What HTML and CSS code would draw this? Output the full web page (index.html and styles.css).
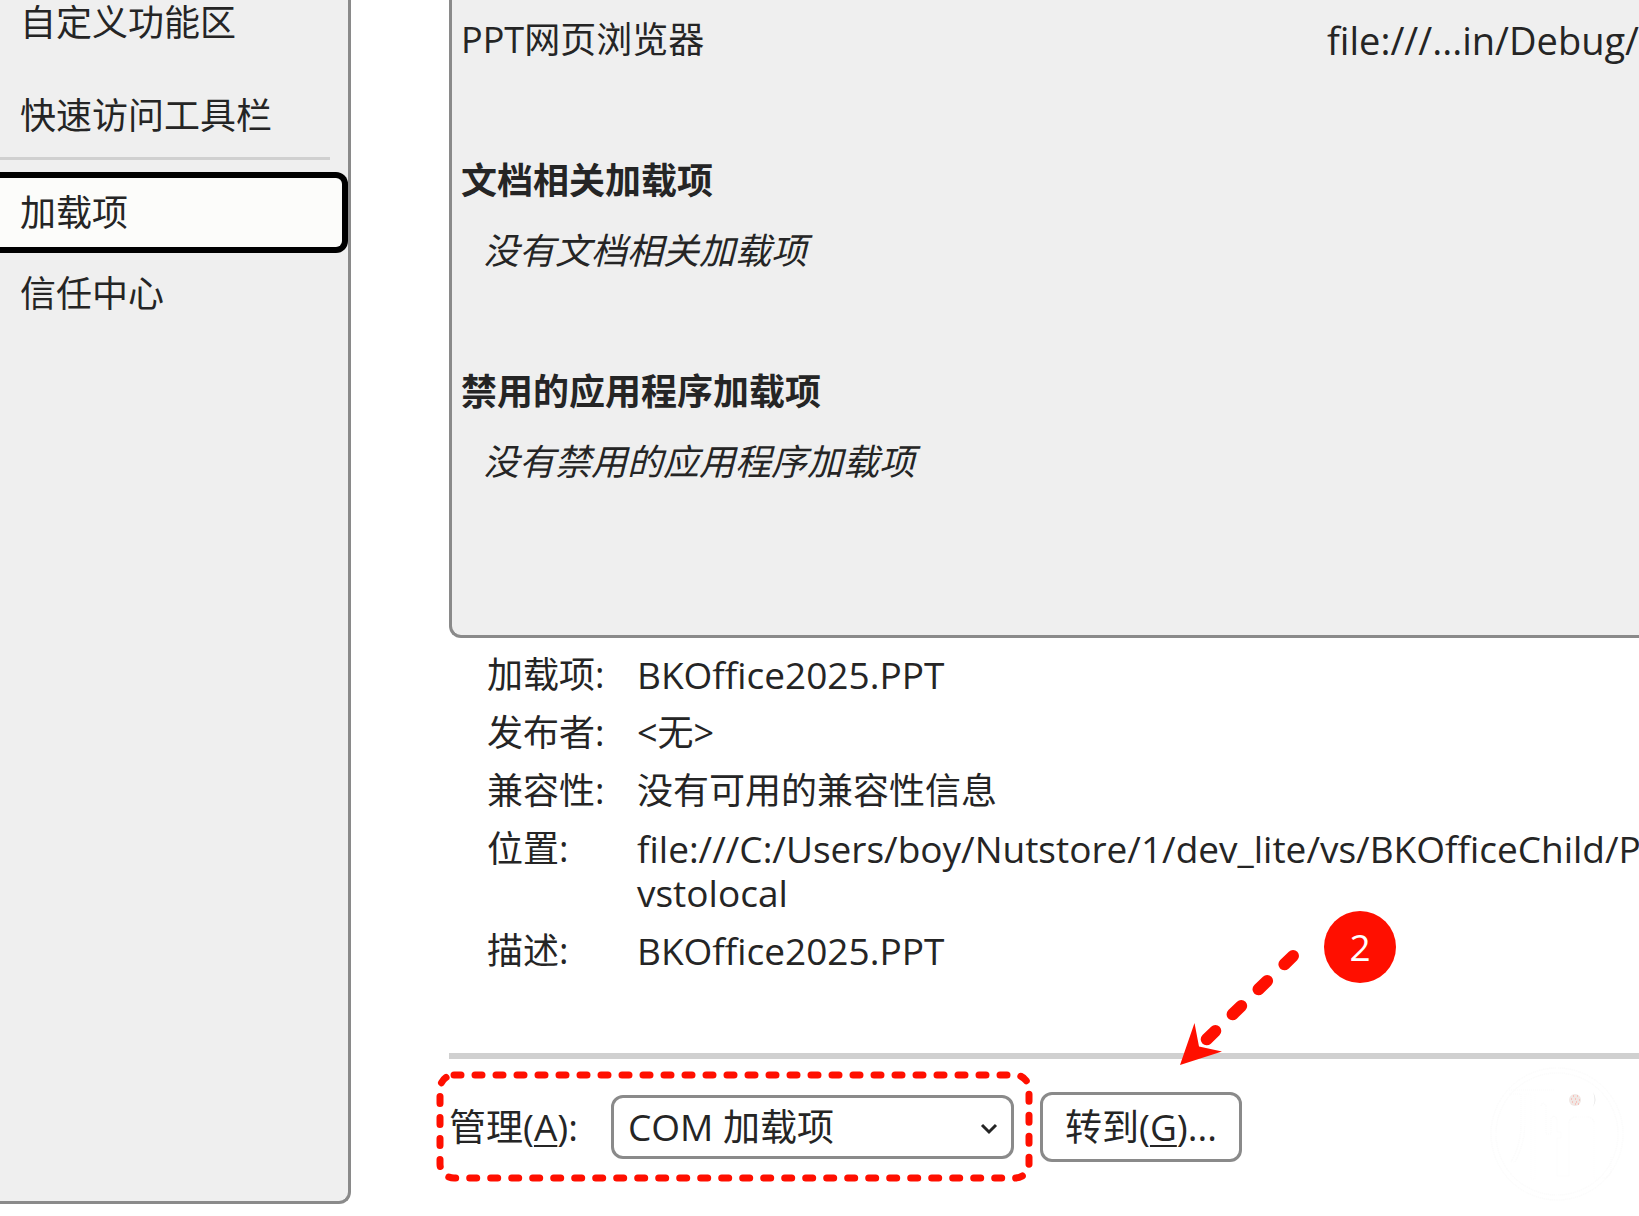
FILE: index.html
```html
<!DOCTYPE html>
<html lang="zh-CN">
<head>
    <meta charset="UTF-8">
    <meta name="viewport" content="width=device-width, initial-scale=1.0">
    <title>加载项</title>
    <link rel="stylesheet" href="styles.css">
</head>
<body>
    <nav class="sidebar">
        <ul class="menu">
            <li><a class="menu-item" href="#ribbon">自定义功能区</a></li>
            <li><a class="menu-item" href="#toolbar">快速访问工具栏</a></li>
            <li class="menu-divider"></li>
            <li><a class="menu-item active" href="#addins" aria-current="page">加载项</a></li>
            <li><a class="menu-item" href="#trust">信任中心</a></li>
        </ul>
    </nav>

    <main class="content">
        <!-- Add-in list -->
        <section class="addin-list">
            <div class="addin-row">
                <span>PPT网页浏览器</span>
                <span class="addin-path">file:///...in/Debug/</span>
            </div>
            <h2 class="group-title">文档相关加载项</h2>
            <p class="group-empty">没有文档相关加载项</p>
            <h2 class="group-title">禁用的应用程序加载项</h2>
            <p class="group-empty">没有禁用的应用程序加载项</p>
        </section>

        <!-- Details of the selected add-in -->
        <dl class="details">
            <dt>加载项:</dt>
            <dd class="latin">BKOffice2025.PPT</dd>
            <dt>发布者:</dt>
            <dd>&lt;无&gt;</dd>
            <dt>兼容性:</dt>
            <dd>没有可用的兼容性信息</dd>
            <dt>位置:</dt>
            <dd class="latin">file:///C:/Users/boy/Nutstore/1/dev_lite/vs/BKOfficeChild/P<br>vstolocal</dd>
            <dt>描述:</dt>
            <dd class="latin">BKOffice2025.PPT</dd>
        </dl>

        <div class="manage">
            <label class="manage-label" for="manageSelect">管理(<u>A</u>):</label>
            <div class="select-wrap">
                <select id="manageSelect" class="manage-select">
                    <option>COM 加载项</option>
                </select>
                <svg class="chevron" width="18" height="12" viewBox="0 0 18 12" aria-hidden="true">
                    <path d="M2 2 L9 9 L16 2" fill="none" stroke="#252525" stroke-width="3"/>
                </svg>
            </div>
            <button class="go-button" type="button">转到(<u>G</u>)...</button>

            <!-- Step 2 callout -->
            <svg class="callout-frame" width="600" height="112" aria-hidden="true">
                <rect x="5" y="4" width="589" height="103" rx="14" fill="none" stroke="#ff0f00" stroke-width="7" stroke-linecap="round" stroke-dasharray="7 14"/>
            </svg>
            <svg class="callout-arrow" width="124" height="120" viewBox="0 0 124 120" aria-hidden="true">
                <path d="M115 10 L28 94" fill="none" stroke="#ff0f00" stroke-width="12" stroke-linecap="round" stroke-dasharray="12 24"/>
                <path d="M2 119 L16.500 77 L21 100.500 L44 105.500 Z" fill="#ff0f00"/>
            </svg>
            <span class="callout-badge">2</span>

            <!-- Faint seal -->
            <svg class="seal" width="136" height="136" viewBox="0 0 136 136" aria-hidden="true">
                <g fill="none" stroke="#fbfbfb" stroke-dasharray="1 1">
                    <circle cx="68" cy="68" r="66"/>
                    <circle cx="68" cy="68" r="61"/>
                    <path d="M20 24 H65 M20 28 H32 V58 Q32 78 22 96 H26 Q36 76 36 58 V28 H42 V113 H46 V28"/>
                    <path d="M52 40 Q54 34 57 40 V68 H62 V52 Q66 48 68 54 V66 H72 V72 H68 V110 H80 V58 Q80 51 88 51 H98 Q105 51 105 58 V112 H114 Q122 112 122 104 V90"/>
                </g>
                <path d="M104 26 Q109 34 104 41 Q107 34 104 26 Z" fill="#e8e8e8"/>
                <circle cx="86" cy="34" r="6" fill="#f0e8e5"/>
                <path d="M84 30h1M88 30h1M82 33h1M86 33h1M90 34h1M83 36h1M87 36h1M86 38h1M89 38h1" stroke="#ff9c92" stroke-width="1"/>
            </svg>
        </div>
    </main>
</body>
</html>
```
FILE: styles.css
```css
* {
    box-sizing: border-box;
}

body {
    margin: 0;
    min-height: 100vh;
    display: flex;
    gap: 98px;
    overflow: hidden;
    background-color: #fff;
    color: #252525;
    font-family: "Open Sans", "Noto Sans CJK SC", sans-serif;
    font-size: 36px;
    line-height: 44px;
}

/* Sidebar */
.sidebar {
    flex: 0 0 351px;
    margin-bottom: 12px;
    background-color: #efefef;
    border: 3px solid #8a8a8a;
    border-width: 0 3px 3px 0;
    border-bottom-right-radius: 12px;
}

.menu {
    margin: -18px 0 0;
    padding: 0;
    list-style: none;
}

.menu-item {
    display: flex;
    align-items: center;
    height: 81px;
    margin-bottom: 12px;
    padding-left: 20px;
    color: inherit;
    text-decoration: none;
}

.menu-divider {
    height: 3px;
    margin: -11px 18px 12px 0;
    background-color: #d0d0d0;
}

.menu-item.active {
    margin-bottom: 0;
    background-color: #fcfcfa;
    border: 6px solid #000;
    border-left: 0;
    border-radius: 0 12px 12px 0;
}

/* Main column */
.content {
    flex: 1;
    min-width: 0;
    display: flex;
    flex-direction: column;
}

.addin-list {
    height: 638px;
    padding: 5px 0 0 9px;
    background-color: #efefef;
    border: 3px solid #8a8a8a;
    border-width: 0 0 3px 3px;
    border-bottom-left-radius: 12px;
}

.addin-row {
    display: flex;
    justify-content: space-between;
    line-height: 70px;
}

.addin-path {
    font-size: 38px;
}

.group-title {
    margin: 71px 0 0;
    font-size: 36px;
    line-height: 70px;
}

.group-empty {
    margin: 0;
    padding-left: 22px;
    font-style: italic;
    line-height: 70px;
}

.details {
    display: grid;
    grid-template-columns: 150px 1fr;
    row-gap: 14px;
    margin: 0;
    padding: 15px 0 80px 38px;
    border-bottom: 6px solid #d0d0d0;
    white-space: nowrap;
}

.details dd {
    margin: 0;
}

.latin {
    font-size: 37px;
}

/* Manage row */
.manage {
    position: relative;
    display: flex;
    align-items: center;
    padding-top: 33px;
    font-size: 37px;
}

.manage-label {
    width: 162px;
}

u {
    text-decoration-thickness: 2px;
    text-underline-offset: 4px;
}

.select-wrap {
    position: relative;
    width: 403px;
    margin-right: 26px;
}

.manage-select {
    appearance: none;
    display: block;
    width: 100%;
    height: 64px;
    padding: 0 48px 0 14px;
    background-color: #fff;
    border: 3px solid #8a8a8a;
    border-radius: 12px;
    color: inherit;
    font: inherit;
}

.chevron {
    position: absolute;
    right: 16px;
    top: 28px;
    pointer-events: none;
}

.go-button {
    height: 70px;
    padding: 0 22px;
    background-color: #fff;
    border: 3px solid #8a8a8a;
    border-radius: 12px;
    color: inherit;
    font: inherit;
}

/* Callout drawn over the row */
.callout-frame {
    position: absolute;
    left: -14px;
    top: 12px;
    pointer-events: none;
}

.callout-arrow {
    position: absolute;
    left: 729px;
    top: -113px;
    pointer-events: none;
}

.callout-badge {
    position: absolute;
    left: 875px;
    top: -148px;
    width: 72px;
    height: 72px;
    border-radius: 50%;
    background-color: #ff0f00;
    color: #fff;
    line-height: 72px;
    text-align: center;
}

.seal {
    position: absolute;
    right: 14px;
    top: 7px;
}
```
